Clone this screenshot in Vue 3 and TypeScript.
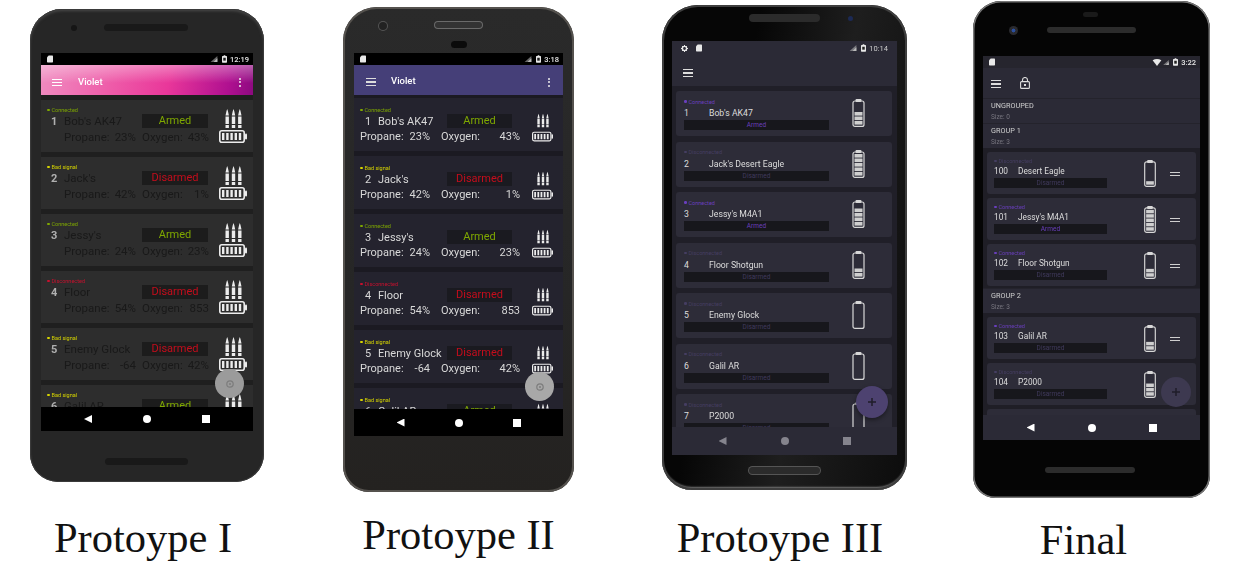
<script setup lang="ts">
type Status = "Connected" | "Bad signal" | "Disconnected"

interface Gun {
  kind: "gun"
  n: number
  name: string
  status: Status
  armed: boolean
  propane?: string
  oxygen?: string
  level?: number
}
interface Group {
  kind: "group"
  label: string
  size: number
}
type Row = Gun | Group

const gun = (
  n: number,
  name: string,
  status: Status,
  armed: boolean,
  extra: Partial<Gun> = {},
): Gun => ({ kind: "gun", n, name, status, armed, ...extra })

const gas = (propane: string, oxygen: string) => ({ propane, oxygen })

const oldRows: Row[] = [
  gun(1, "Bob's AK47", "Connected", true, gas("23%", "43%")),
  gun(2, "Jack's", "Bad signal", false, gas("42%", "1%")),
  gun(3, "Jessy's", "Connected", true, gas("24%", "23%")),
  gun(4, "Floor", "Disconnected", false, gas("54%", "853")),
  gun(5, "Enemy Glock", "Bad signal", false, gas("-64", "42%")),
  gun(6, "Galil AR", "Bad signal", true, gas("", "")),
]

const phones = [
  { id: "p1", caption: "Protoype I", title: "Violet", time: "12:19", rows: oldRows, fab: "fab-gear" },
  { id: "p2", caption: "Protoype II", title: "Violet", time: "3:18", rows: oldRows, fab: "fab-gear" },
  {
    id: "p3",
    caption: "Protoype III",
    title: "",
    time: "10:14",
    fab: "fab-plus",
    rows: [
      gun(1, "Bob's AK47", "Connected", true, { level: 3 }),
      gun(2, "Jack's Desert Eagle", "Disconnected", false, { level: 5 }),
      gun(3, "Jessy's M4A1", "Connected", true, { level: 4 }),
      gun(4, "Floor Shotgun", "Disconnected", false, { level: 2 }),
      gun(5, "Enemy Glock", "Disconnected", false, { level: 0 }),
      gun(6, "Galil AR", "Disconnected", false, { level: 0 }),
      gun(7, "P2000", "Disconnected", false, { level: 0 }),
    ] as Row[],
  },
  {
    id: "p4",
    caption: "Final",
    title: "",
    time: "3:22",
    fab: "fab-plus",
    rows: [
      { kind: "group", label: "UNGROUPED", size: 0 },
      { kind: "group", label: "GROUP 1", size: 3 },
      gun(100, "Desert Eagle", "Disconnected", false, { level: 1 }),
      gun(101, "Jessy's M4A1", "Connected", true, { level: 5 }),
      gun(102, "Floor Shotgun", "Connected", false, { level: 2 }),
      { kind: "group", label: "GROUP 2", size: 3 },
      gun(103, "Galil AR", "Connected", false, { level: 2 }),
      gun(104, "P2000", "Disconnected", false, { level: 3 }),
      gun(105, "", "Disconnected", false, { level: 0 }),
    ] as Row[],
  },
]

const statusClass = (s: Status) => s.toLowerCase().replace(" ", "-")
</script>

<template>
  <svg class="defs" aria-hidden="true">
    <symbol id="sd" viewBox="0 0 7 8">
      <path d="M2 0h4.2q.8 0 .8.8v6.4q0 .8-.8.8H.8Q0 8 0 7.2V2z" fill="currentColor" />
    </symbol>
    <symbol id="signal" viewBox="0 0 9 8">
      <path d="M9 0v8H0z" fill="currentColor" opacity=".55" />
      <path d="M9 3v5H4z" fill="currentColor" />
    </symbol>
    <symbol id="wifi" viewBox="0 0 10 8">
      <path d="M0 1.5Q5-1.5 10 1.5L5 8z" fill="currentColor" />
    </symbol>
    <symbol id="batt" viewBox="0 0 6 9">
      <path d="M2 0h2v1h1.2q.8 0 .8.8v6.4q0 .8-.8.8H.8Q0 9 0 8.200V1.800Q0 1 .8 1H2z" fill="currentColor" />
      <rect x="1.500" y="3" width="3" height="3.500" fill="#222" />
    </symbol>
    <symbol id="bullets" viewBox="0 0 17 19">
      <path
        id="round"
        d="M0.500 19V16h3.400v3zM0.500 15V7.500h3.400V15zM0.500 6.500 1.500 2 2.200 0 2.900 2 3.900 6.500z"
        fill="currentColor"
      />
      <use href="#round" x="6.300" />
      <use href="#round" x="12.600" />
    </symbol>
    <symbol id="hbatt" viewBox="0 0 28 13">
      <rect x=".8" y=".8" width="24.400" height="11.400" rx="2" fill="none" stroke="currentColor" stroke-width="1.600" />
      <rect x="26" y="3.500" width="2" height="6" rx="1" fill="currentColor" />
      <path d="M4.200 3v7M8.400 3v7M12.600 3v7M16.800 3v7M21 3v7" stroke="currentColor" stroke-width="2.400" />
    </symbol>
    <symbol id="lock" viewBox="0 0 10 12">
      <path d="M2.500 5V3a2.500 2.500 0 0 1 5 0v2" fill="none" stroke="currentColor" stroke-width="1.100" />
      <rect x=".6" y="4.600" width="8.800" height="6.800" rx="1" fill="none" stroke="currentColor" stroke-width="1.100" />
      <rect x="4" y="7" width="2" height="2" fill="currentColor" />
    </symbol>
  </svg>

  <main class="page">
    <figure v-for="phone in phones" :key="phone.id" class="figure" :class="phone.id">
      <div class="body">
        <i class="camera" />
        <i class="speaker" />
        <i class="earpiece" />
        <i class="speaker-low" />

        <div class="screen">
          <div class="status-bar">
            <svg v-if="phone.id === 'p3'" class="gear" viewBox="0 0 10 10">
              <circle cx="5" cy="5" r="3" fill="none" stroke="currentColor" stroke-width="2" />
              <path d="M5 0v10M0 5h10M1.500 1.500l7 7M8.500 1.500l-7 7" stroke="currentColor" stroke-width="1.400" stroke-dasharray="2 6" />
            </svg>
            <svg class="sd"><use href="#sd" /></svg>
            <span class="spacer" />
            <svg v-if="phone.id === 'p4'" class="wifi"><use href="#wifi" /></svg>
            <svg class="signal"><use href="#signal" /></svg>
            <svg class="batt"><use href="#batt" /></svg>
            <span class="time">{{ phone.time }}</span>
          </div>

          <header class="app-bar">
            <span class="burger"><i /><i /><i /></span>
            <span v-if="phone.title" class="title">{{ phone.title }}</span>
            <svg v-if="phone.id === 'p4'" class="lock"><use href="#lock" /></svg>
            <span v-if="phone.title" class="dots"><i /><i /><i /></span>
          </header>

          <div class="list">
            <template v-for="(row, i) in phone.rows" :key="i">
              <div v-if="row.kind === 'group'" class="group">
                <div class="group-label">{{ row.label }}</div>
                <div class="group-size">Size: {{ row.size }}</div>
              </div>

              <article v-else class="card">
                <div class="main">
                  <div class="state" :class="statusClass(row.status)">
                    <i class="led" />{{ row.status }}
                  </div>
                  <div class="line">
                    <span class="num">{{ row.n }}</span>
                    <span class="name">{{ row.name }}</span>
                    <span class="pill" :class="row.armed ? 'armed' : 'disarmed'">
                      {{ row.armed ? "Armed" : "Disarmed" }}
                    </span>
                  </div>
                  <div v-if="row.propane !== undefined" class="gases">
                    <span class="gas propane"><span>Propane:</span><span>{{ row.propane }}</span></span>
                    <span class="gas oxygen"><span>Oxygen:</span><span>{{ row.oxygen }}</span></span>
                  </div>
                </div>

                <div v-if="row.propane !== undefined" class="gauges">
                  <svg class="bullets"><use href="#bullets" /></svg>
                  <svg class="hbatt"><use href="#hbatt" /></svg>
                </div>
                <template v-else>
                  <svg class="vbatt" viewBox="0 0 13 28">
                    <rect x="3.500" y="0" width="6" height="3" rx="1" fill="#d8d8d8" />
                    <rect x="1" y="2" width="11" height="25.400" rx="2" fill="none" stroke="#d8d8d8" stroke-width="1.200" />
                    <rect
                      v-for="s in row.level"
                      :key="s"
                      x="2.500"
                      :y="26 - s * 4.500 + 0.500"
                      width="8"
                      height="3.600"
                      fill="#cfcfcf"
                    />
                  </svg>
                  <span v-if="phone.id === 'p4'" class="handle"><i /><i /></span>
                </template>
              </article>
            </template>
          </div>

          <nav class="nav">
            <i class="back" />
            <i class="home" />
            <i class="recent" />
          </nav>

          <span class="fab" :class="phone.fab">
            <svg v-if="phone.fab === 'fab-gear'" viewBox="0 0 10 10">
              <circle cx="5" cy="5" r="3.200" fill="none" stroke="#7d7d7d" stroke-width="1.200" />
              <circle cx="5" cy="5" r="1" fill="#7d7d7d" />
            </svg>
            <svg v-else viewBox="0 0 10 10">
              <path d="M5 1v8M1 5h8" stroke="#1f1d29" stroke-width="1.500" />
            </svg>
          </span>
        </div>
      </div>
      <figcaption class="caption">{{ phone.caption }}</figcaption>
    </figure>
  </main>
</template>

<style scoped>
.defs {
  position: absolute;
  width: 0;
  height: 0;
}

.page {
  display: flex;
  align-items: flex-start;
  width: 1241px;
  height: 571px;
  overflow: hidden;
  background: #fff;
}

.figure {
  display: flex;
  flex-direction: column;
  flex: none;
  margin: 0;
}
.p1 { width: 234px; margin: 9px 0 0 30px; }
.p2 { width: 231px; margin: 7px 0 0 79px; }
.p3 { width: 245px; margin: 5px 0 0 88px; }
.p4 { width: 237px; margin: 1px 0 0 66px; }

.caption {
  align-self: center;
  white-space: nowrap;
  font: 42.500px/46px "Liberation Serif", serif;
  color: #111;
}
.p1 .caption { margin: 33px 0 0 -8px; }
.p2 .caption { margin: 20px 0 0 0; }
.p3 .caption { margin: 25px 0 0 -9px; }
.p4 .caption { margin: 19px 0 0 -16px; }

/* device shell */
.body {
  position: relative;
  box-sizing: border-box;
  filter: blur(0.45px);
  font-family: Roboto, "Liberation Sans", sans-serif;
}
.body > i {
  position: absolute;
  display: block;
}
.p1 .body {
  height: 473px;
  padding: 44px 11px 0;
  border-radius: 32px 32px 28px 28px;
  background: #262626;
  box-shadow: inset 0 0 0 1px #3a3a3a, inset 0 2px 3px #4a4a4a;
}
.p2 .body {
  height: 485px;
  padding: 46px 11px 0;
  border-radius: 34px 34px 26px 26px;
  background: linear-gradient(#2a2a2a, #262626 60%, #242220);
  box-shadow: inset 0 0 0 2px #55524e;
}
.p3 .body {
  height: 485px;
  padding: 36px 10px 0;
  border-radius: 36px 36px 30px 30px;
  background: linear-gradient(100deg, #060606 30%, #1e1e1e 60%, #0c0c0c);
  box-shadow: inset 0 0 0 2px #3e3e3e, inset 0 -3px 2px #777;
}
.p4 .body {
  height: 497px;
  padding: 55px 10px 0;
  border-radius: 28px 28px 22px 22px;
  background: #050505;
  box-shadow: inset 0 0 0 1.500px #777;
}

.camera { border-radius: 50%; }
.p1 .camera { left: 41px; top: 16px; width: 6px; height: 6px; background: #151515; }
.p2 .camera { left: 36px; top: 15px; width: 8px; height: 8px; background: #222; box-shadow: 0 0 0 1px #555; }
.p3 .camera { left: 186px; top: 11px; width: 5px; height: 5px; background: #1c2a55; }
.p4 .camera { left: 36px; top: 25px; width: 9px; height: 9px; background: radial-gradient(#2a4fa0 25%, #2a2a2e 35%); }

.speaker, .earpiece, .speaker-low { border-radius: 4px; }
.p1 .speaker { left: 74px; top: 15px; width: 84px; height: 7px; background: #191919; }
.p2 .speaker { left: 92px; top: 15px; width: 47px; height: 6px; background: #333; box-shadow: 0 0 0 1px #6a6a6a; }
.p3 .speaker { left: 87px; top: 9px; width: 71px; height: 8px; background: #2b2b2b; }
.p4 .speaker { left: 74px; top: 26px; width: 89px; height: 6px; background: #2c2c2c; }
.p2 .earpiece { left: 108px; top: 34px; width: 16px; height: 7px; background: #0b0b0b; }
.p4 .earpiece { left: 110px; top: 11px; width: 15px; height: 5px; background: #1a1a1a; }
.p1 .speaker-low { left: 75px; top: 449px; width: 83px; height: 7px; background: #191919; }
.p3 .speaker-low { left: 87px; top: 462px; width: 71px; height: 7px; background: #2b2b2b; box-shadow: 0 0 0 1px #555; }
.p4 .speaker-low { left: 72px; top: 466px; width: 90px; height: 6px; background: #2c2c2c; }

/* screen */
.screen {
  position: relative;
  display: flex;
  flex-direction: column;
  overflow: hidden;
}
.p1 .screen { height: 378px; background: #1f1f1f; }
.p2 .screen { height: 383px; background: #1b1a22; }
.p3 .screen { height: 414px; background: #201f28; }
.p4 .screen { height: 384px; background: #1f1e26; }

.status-bar {
  display: flex;
  align-items: center;
  flex: none;
  height: 12px;
  padding: 0 4px 0 6px;
  background: #000;
  color: #e8e8e8;
}
.p3 .status-bar { height: 14px; padding: 0 9px; background: #2b2a36; }
.p4 .status-bar { padding: 0 4px 0 6px; background: #26252e; }
.spacer { flex: 1; }
.gear { width: 7px; height: 7px; margin-right: 8px; }
.sd { width: 6px; height: 8px; }
.wifi { width: 10px; height: 7px; margin-right: 1px; }
.signal { width: 8px; height: 6px; margin-right: 4px; color: #bbb; }
.p4 .signal { width: 6px; height: 5px; }
.batt { width: 5px; height: 8px; margin-right: 3px; }
.time { font-size: 7.500px; font-weight: 500; }
.p3 .time { font-weight: 400; color: #ccc; }

.app-bar {
  display: flex;
  align-items: center;
  flex: none;
  box-sizing: border-box;
  height: 30px;
  padding: 4px 12px 0 11px;
  color: #fff;
}
.p1 .app-bar {
  background:
    linear-gradient(180deg, rgba(255, 255, 255, 0.35), rgba(255, 255, 255, 0) 60%),
    linear-gradient(100deg, #f08cc0 0%, #ee5aa8 35%, #e9379a 60%, #b01090 88%, #8c0a80 100%);
}
.p2 .app-bar { background: #453f78; padding: 4px 13px 0 12px; }
.p3 .app-bar { height: 31px; padding-top: 5px; background: #2b2a36; }
.p4 .app-bar { padding: 2px 12px 0 8px; background: #2b2a36; }

.burger {
  display: flex;
  flex-direction: column;
  gap: 2px;
  width: 10px;
}
.burger i { height: 1px; background: currentColor; }
.p2 .burger i, .p3 .burger i, .p4 .burger i { height: 1.400px; background: #ddd; }
.title {
  margin: -2px 0 0 16px;
  font-size: 9.500px;
  font-weight: 500;
}
.p2 .title { margin: -4px 0 0 15px; }
.lock { width: 10px; height: 12px; margin: -2px 0 0 19px; color: #ddd; }
.dots {
  display: flex;
  flex-direction: column;
  gap: 1.500px;
  margin-left: auto;
}
.dots i { width: 2px; height: 2px; border-radius: 50%; background: #eee; }

.list {
  flex: 1;
  display: flex;
  flex-direction: column;
  min-height: 0;
  overflow: hidden;
}
.p1 .list { gap: 5px; padding-top: 5px; }
.p2 .list { gap: 5px; padding-top: 3px; }
.p3 .list { gap: 5.500px; padding: 5px 5px 0 4px; }
.p4 .list { gap: 4px; padding: 0 4px; }

.card {
  display: flex;
  flex: none;
  box-sizing: border-box;
}
.p1 .card { height: 52px; padding: 6px 6px 0; background: #2d2d2d; }
.p2 .card { height: 53px; padding: 8px 10px 0 6px; background: #24232e; }
.p3 .card { height: 45px; padding: 6px 0 0 8px; border-radius: 3px; background: #2d2c38; }
.p4 .card { height: 42px; padding: 5px 0 0 7px; border-radius: 3px; background: #2d2c38; }

.main { flex: none; }
.p3 .main { width: 145px; }
.p4 .main { width: 113px; }

.state {
  display: flex;
  align-items: center;
  height: 8px;
  font-size: 5.500px;
}
.p3 .state { height: 9px; }
.led {
  width: 2.500px;
  height: 2.500px;
  margin-right: 2px;
  border-radius: 50%;
  background: currentColor;
}
.connected { color: #7fa800; }
.bad-signal { color: #d6d400; }
.disconnected { color: #c8102e; }
.p3 .connected, .p4 .connected { color: #6a3fbe; }
.p3 .disconnected, .p4 .disconnected { color: #453e62; }

.line { display: flex; align-items: center; }
.p1 .line { height: 14px; padding-left: 4px; }
.p2 .line { height: 14px; padding-left: 5px; }
.p3 .line, .p4 .line { flex-wrap: wrap; }

.num { flex: none; font-size: 11px; }
.name { flex: none; font-size: 11px; white-space: nowrap; overflow: hidden; }
.p1 .num { width: 13px; font-weight: 700; color: #b0b0b0; }
.p1 .name { width: 78px; color: #191919; font-size: 11.500px; }
.p2 .num { width: 13px; color: #d8d8d8; }
.p2 .name { width: 69px; color: #d8d8d8; }
.p3 .num { width: 25px; height: 14px; line-height: 14px; font-size: 8.700px; color: #ddd; }
.p3 .name { width: 120px; height: 14px; line-height: 14px; font-size: 8.700px; color: #ddd; }
.p4 .num { width: 24px; height: 13px; line-height: 13px; font-size: 8.300px; color: #ddd; }
.p4 .name { width: 89px; height: 13px; line-height: 13px; font-size: 8.300px; color: #ddd; }

.pill {
  flex: none;
  display: block;
  text-align: center;
  background: #1c1c1c;
}
.p1 .pill { width: 66px; height: 14px; font-size: 11px; line-height: 14px; }
.p2 .pill { width: 65px; height: 14px; font-size: 11px; line-height: 14px; background: #1a1a20; }
.p3 .pill, .p4 .pill { width: 100%; height: 10px; font-size: 6.500px; line-height: 10px; background: #17171c; }
.armed { color: #7fa800; }
.disarmed { color: #c40d1c; }
.p3 .armed, .p4 .armed { color: #6a3fbe; }
.p3 .disarmed, .p4 .disarmed { color: #403a5c; }

.gases { display: flex; font-size: 11.500px; line-height: 14px; margin-top: 2px; }
.gas { display: flex; justify-content: space-between; white-space: nowrap; }
.p1 .gases { padding-left: 17px; color: #191919; }
.p1 .propane { width: 72px; margin-right: 6px; }
.p1 .oxygen { width: 67px; }
.p2 .gases { color: #d8d8d8; font-size: 11px; }
.p2 .propane { width: 70px; margin-right: 11px; }
.p2 .oxygen { width: 79px; }

.gauges {
  display: flex;
  flex-direction: column;
  align-items: center;
  margin-left: auto;
  color: #ececec;
}
.p1 .gauges { gap: 2px; padding-top: 3px; }
.p2 .gauges { gap: 3px; padding-top: 7px; }
.bullets { width: 17px; height: 19px; }
.hbatt { width: 28px; height: 13px; }
.p2 .bullets { width: 12px; height: 15px; }
.p2 .hbatt { width: 21px; height: 11px; }

.vbatt { flex: none; width: 13px; height: 28px; }
.p3 .vbatt { margin: 2px 0 0 23px; }
.p4 .vbatt { width: 14px; height: 27px; margin: 3px 0 0 36px; }
.handle {
  display: flex;
  flex-direction: column;
  gap: 1.500px;
  width: 10px;
  margin: 15px 0 0 13px;
}
.handle i { height: 1.200px; background: #cfcfcf; }

.group {
  flex: none;
  box-sizing: border-box;
  height: 25px;
  margin: -2px -4px 0;
  padding: 1px 8px 0;
  border-top: 1px solid #24232c;
  background: #2b2a36;
}
.group:first-child { margin-top: 0; margin-bottom: -2px; }
.group-label { font-size: 7.300px; line-height: 11px; color: #d0d0d0; }
.group-size { margin-top: 1.500px; font-size: 6.500px; line-height: 9px; color: #77757f; }

.nav {
  display: flex;
  align-items: center;
  justify-content: center;
  flex: none;
  background: #000;
  color: #fff;
}
.p1 .nav { height: 24px; gap: 51px; }
.p2 .nav { height: 27px; gap: 50px; }
.p3 .nav { height: 28px; gap: 54px; background: #2b2a36; color: #85848d; }
.p4 .nav { height: 25px; gap: 53px; background: #2b2a36; }
.nav i { display: block; width: 8px; height: 8px; background: currentColor; }
.nav .back { clip-path: polygon(0 50%, 100% 0, 100% 100%); }
.nav .home { border-radius: 50%; }

.fab {
  position: absolute;
  display: flex;
  align-items: center;
  justify-content: center;
  border-radius: 50%;
}
.fab svg { width: 10px; height: 10px; }
.p1 .fab { right: 9px; bottom: 33px; width: 29px; height: 29px; background: #9b9b9b; }
.p2 .fab { right: 9px; bottom: 35px; width: 29px; height: 29px; background: #a8a8a8; }
.p3 .fab { right: 9px; bottom: 37px; width: 32px; height: 32px; background: #4d4270; box-shadow: 0 2px 4px rgba(0, 0, 0, 0.4); }
.p4 .fab { right: 9px; bottom: 33px; width: 30px; height: 30px; background: #3d3950; }
</style>

<style>
body {
  background: #fff;
}
</style>
